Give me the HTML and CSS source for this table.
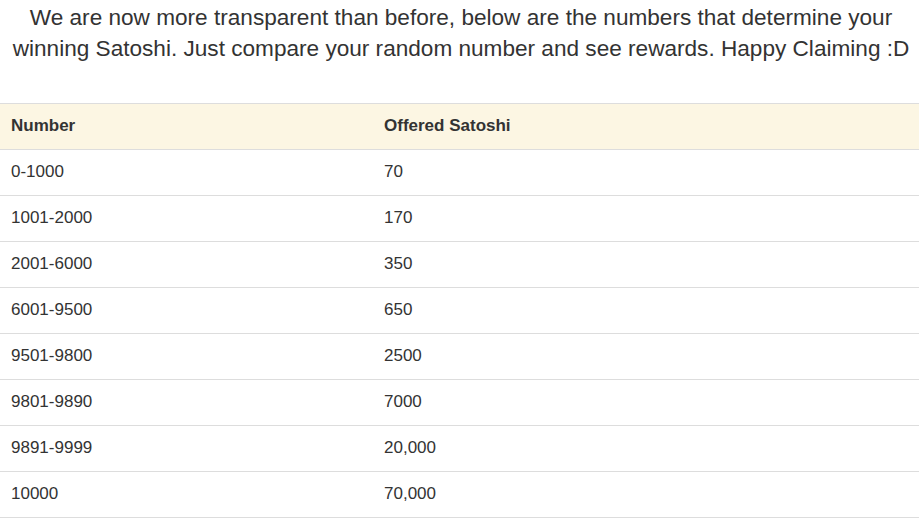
FILE: index.html
```html
<!DOCTYPE html>
<html>
<head>
<meta charset="utf-8">
<link rel="stylesheet" href="styles.css">
</head>
<body>
<p class="intro">We are now more transparent than before, below are the numbers that determine your winning Satoshi. Just compare your random number and see rewards. Happy Claiming :D</p>
<table class="rewards">
  <thead>
    <tr><th class="col-num">Number</th><th>Offered Satoshi</th></tr>
  </thead>
  <tbody>
    <tr><td>0-1000</td><td>70</td></tr>
    <tr><td>1001-2000</td><td>170</td></tr>
    <tr><td>2001-6000</td><td>350</td></tr>
    <tr><td>6001-9500</td><td>650</td></tr>
    <tr><td>9501-9800</td><td>2500</td></tr>
    <tr><td>9801-9890</td><td>7000</td></tr>
    <tr><td>9891-9999</td><td>20,000</td></tr>
    <tr><td>10000</td><td>70,000</td></tr>
  </tbody>
</table>
</body>
</html>
```
FILE: styles.css
```css
html, body {
  margin: 0;
  padding: 0;
  background: #fff;
}
body {
  font-family: "Liberation Sans", Arial, sans-serif;
  color: #333;
}
.intro {
  margin: 2px 0 0;
  font-size: 22.6px;
  line-height: 31.4px;
  text-align: center;
}
.rewards {
  margin-top: 38px;
  width: 919px;
  border-collapse: collapse;
  font-size: 17px;
}
.rewards th,
.rewards td {
  text-align: left;
  padding: 0 11px;
  height: 45px;
  border-top: 1px solid #ddd;
  vertical-align: middle;
}
.rewards tbody tr:last-child td {
  border-bottom: 1px solid #ddd;
}
.rewards th {
  font-weight: bold;
  background: #fcf6e3;
}
.col-num {
  width: 351px;
}
```
